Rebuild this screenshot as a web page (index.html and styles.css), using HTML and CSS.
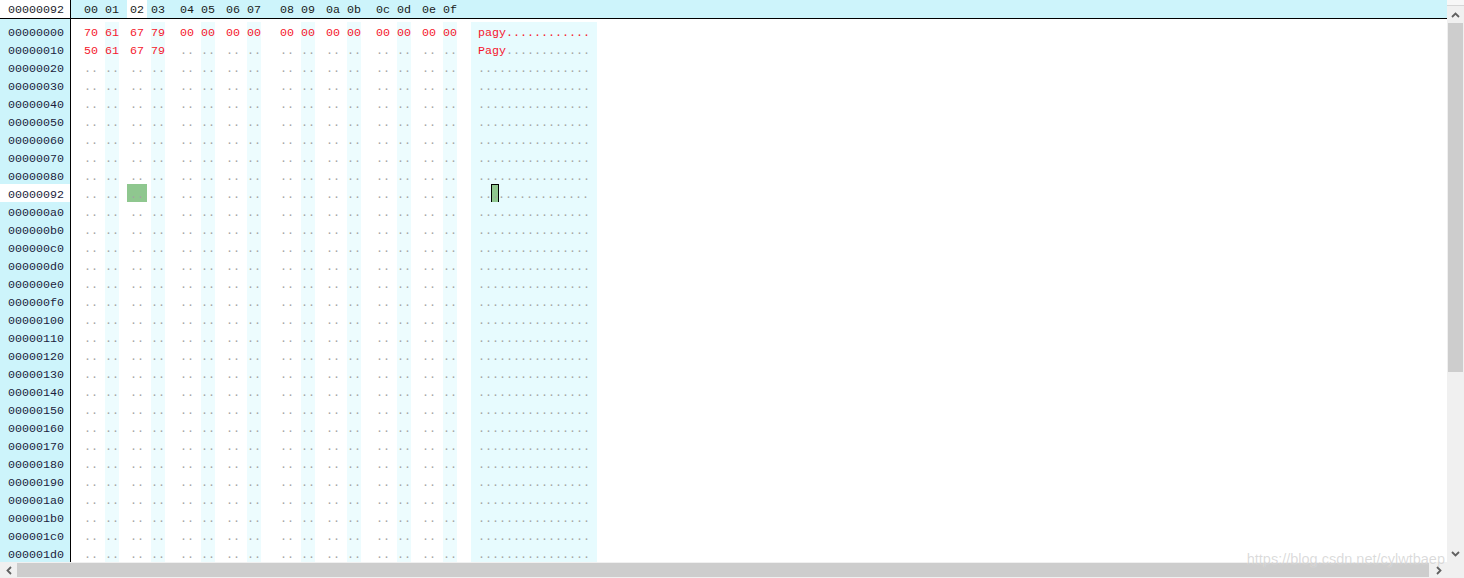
FILE: index.html
```html
<!doctype html>
<html>
	<head>
		<meta charset="utf-8"/>
		<title>Hex view</title>
		<link rel="stylesheet" href="styles.css">
	</head>
	<body>
		<div class="window">
			<div class="view">
				<div class="head">
					<div class="addr-head">00000092</div>
					<div id="cols" class="line cols"></div>
				</div>
				<div class="body">
					<div id="addrs" class="addrs"></div>
					<div id="dump" class="dump"></div>
				</div>
			</div>

			<div class="vscroll">
				<div class="vs-cap"></div>
				<div class="sb-btn">
					<svg width="9" height="6" viewBox="0 0 9 6"><path d="M1 5 L4.5 1.5 L8 5" fill="none" stroke="#606060" stroke-width="1.8"/></svg>
				</div>
				<div class="vthumb"></div>
				<div class="track"></div>
				<div class="sb-btn">
					<svg width="9" height="6" viewBox="0 0 9 6"><path d="M1 1 L4.5 4.5 L8 1" fill="none" stroke="#606060" stroke-width="1.8"/></svg>
				</div>
			</div>

			<div class="hscroll">
				<div class="sb-btn">
					<svg width="6" height="9" viewBox="0 0 6 9"><path d="M5 1 L1.5 4.5 L5 8" fill="none" stroke="#606060" stroke-width="1.8"/></svg>
				</div>
				<div class="hthumb"></div>
				<div class="track"></div>
				<div class="sb-btn">
					<svg width="6" height="9" viewBox="0 0 6 9"><path d="M1 1 L4.5 4.5 L1 8" fill="none" stroke="#606060" stroke-width="1.8"/></svg>
				</div>
			</div>
			<div class="corner"></div>

			<div class="watermark">https://blog.csdn.net/cylwtbaep</div>
		</div>

		<script>
			// rows shown in the view, the cursor sits on 0x92
			const rows = [];
			for (let a = 0; a <= 0x80; a += 0x10) rows.push(a);
			rows.push(0x92);
			for (let a = 0xa0; a <= 0x1d0; a += 0x10) rows.push(a);

			const data = {
				0x00: [0x70, 0x61, 0x67, 0x79, 0, 0, 0, 0, 0, 0, 0, 0, 0, 0, 0, 0],
				0x10: [0x50, 0x61, 0x67, 0x79]
			};
			const cursor = { row: 0x92, col: 2 };

			function hex(n, len) {
				return n.toString(16).padStart(len, '0');
			}

			// column labels
			let cols = document.getElementById('cols');
			for (let i = 0; i < 16; i++) {
				let cell = document.createElement('span');
				cell.className = i == cursor.col ? 'b sel' : 'b';
				cell.textContent = hex(i, 2);
				cols.appendChild(cell);
			}

			let addrs = document.getElementById('addrs');
			let dump = document.getElementById('dump');

			rows.forEach(function (a) {
				let addr = document.createElement('div');
				addr.className = a == cursor.row ? 'addr cur' : 'addr';
				addr.textContent = hex(a, 8);
				addrs.appendChild(addr);

				let bytes = data[a] || [];
				let row = document.createElement('div');
				row.className = 'line row';

				for (let i = 0; i < 16; i++) {
					let cell = document.createElement('span');
					let cls = 'b';
					if (i < bytes.length) {
						cls += ' hi';
						cell.textContent = hex(bytes[i], 2);
					} else {
						cls += ' dim';
						cell.textContent = '..';
					}
					if (a == cursor.row && i == cursor.col) cls += ' sel';
					cell.className = cls;
					row.appendChild(cell);
				}

				let ascii = document.createElement('span');
				ascii.className = 'ascii';
				for (let i = 0; i < 16; i++) {
					let ch = document.createElement('span');
					if (i < bytes.length) {
						let c = bytes[i];
						ch.className = 'hi';
						ch.textContent = c >= 32 && c < 127 ? String.fromCharCode(c) : '.';
					} else {
						ch.className = 'dim';
						ch.textContent = '.';
					}
					if (a == cursor.row && i == cursor.col) ch.className += ' caret';
					ascii.appendChild(ch);
				}
				row.appendChild(ascii);
				dump.appendChild(row);
			});
		</script>
	</body>
</html>
```

FILE: styles.css
```css
* {
	box-sizing: border-box;
}

body {
	margin: 0;
	background-color: #fff;
	font-family: "Liberation Mono", "DejaVu Sans Mono", monospace;
	font-size: 11.67px;
	overflow: hidden;
}

.window {
	position: relative;
	display: grid;
	grid-template-columns: 1447px 17px;
	grid-template-rows: 562px 16px;
	width: 1464px;
	height: 578px;
}

.view {
	display: flex;
	flex-direction: column;
	overflow: hidden;
}

/* header with the column numbers */
.head {
	display: flex;
	height: 19px;
	background-color: #cdf4fb;
	border-bottom: 1px solid #000;
}

.addr-head {
	width: 71px;
	padding-left: 8px;
	line-height: 20px;
	background-color: #fff;
	border-right: 1px solid #000;
	color: #1c1c2c;
}

.cols {
	padding-left: 13px;
	line-height: 20px;
	color: #1a1a1a;
}

.cols .b {
	height: 18px;
}

.body {
	display: flex;
	flex: 1;
}

.addrs {
	width: 71px;
	padding-top: 3px;
	background-color: #cdf4fb;
	border-right: 1px solid #000;
	color: #1c1c3c;
}

.addr {
	height: 18px;
	line-height: 22px;
	padding-left: 8px;
}

.addr.cur {
	background-color: #fff;
}

.dump {
	padding: 3px 0 0 13px;
}

/* byte cells */
.line {
	display: flex;
}

.row {
	height: 18px;
	line-height: 22px;
}

.b {
	width: 14px;
	text-align: center;
}

.line .b:nth-child(even) {
	margin-left: 7px;
}

.line .b:nth-child(4n+3) {
	margin-left: 11px;
}

.line .b:nth-child(8n+5) {
	margin-left: 15px;
}

.line .b:nth-child(9) {
	margin-left: 19px;
}

.row .b:nth-child(even) {
	background-color: #edfcfe;
}

.cols .b.sel {
	background-color: #fff;
	box-shadow: -3px 0 0 #fff, 3px 0 0 #fff;
}

.row .b.sel {
	background-color: #8fc78f;
	box-shadow: -3px 0 0 #8fc78f, 3px 0 0 #8fc78f;
}

.hi {
	color: #f5162c;
}

.dim {
	color: #a3a3a3;
}

.ascii {
	width: 126px;
	margin-left: 14px;
	padding-left: 7px;
	background-color: #e7fbfe;
	white-space: pre;
}

.caret {
	display: inline-block;
	width: 8px;
	height: 19px;
	margin-left: -1px;
	margin-right: -1px;
	vertical-align: top;
	text-align: center;
	background-color: #8fc78f;
	border: 1px solid #000;
	line-height: 20px;
}

/* scrollbars */
.vscroll {
	display: flex;
	flex-direction: column;
	background-color: #f0f0f0;
}

.vs-cap {
	height: 6px;
	background-color: #f7f7f7;
	border-bottom: 1px solid #d6d6d6;
}

.sb-btn {
	display: flex;
	align-items: center;
	justify-content: center;
	flex: 0 0 17px;
}

.vthumb {
	height: 349px;
	margin: 0 1px;
	background-color: #cdcdcd;
}

.track {
	flex: 1;
}

.hscroll {
	display: flex;
	background-color: #f0f0f0;
}

.hthumb {
	width: 1412px;
	margin: 1px 0;
	background-color: #cdcdcd;
}

.corner {
	background-color: #f0f0f0;
}

.watermark {
	position: absolute;
	right: 19px;
	bottom: 11px;
	font-family: "Liberation Sans", Arial, sans-serif;
	font-size: 14.5px;
	line-height: 16px;
	color: rgba(150, 150, 150, 0.35);
	text-shadow: 0 0 1px rgba(255, 255, 255, 0.8);
}
```
